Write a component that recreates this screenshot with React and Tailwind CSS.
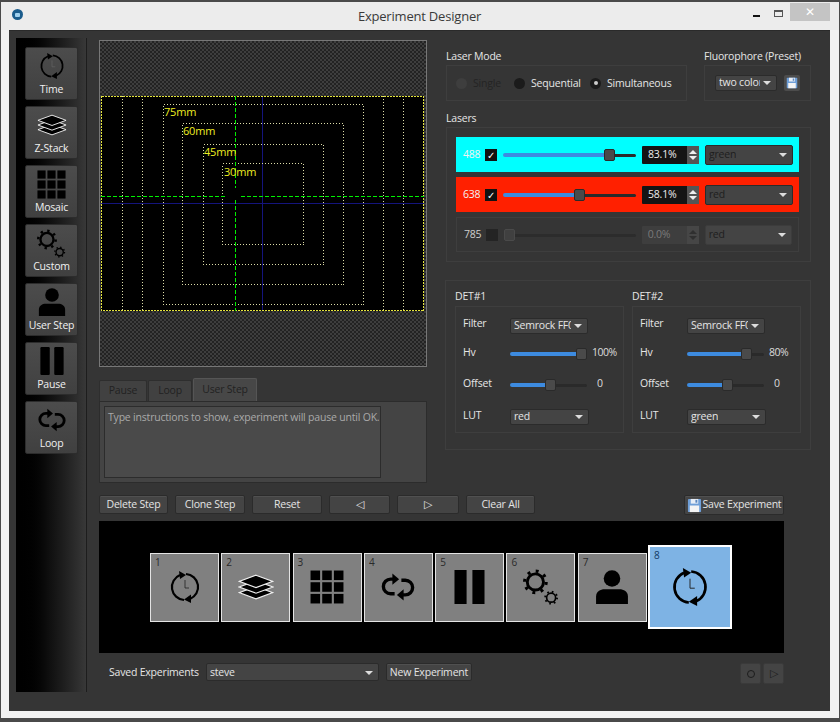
import React from 'react'

const FONT = { fontFamily: '"Open Sans", "Noto Sans", sans-serif' }

function ClockIcon({ className, faint }) {
  return (
    <svg viewBox="0 0 32 32" className={className}>
      <g fill="none" stroke="#000" strokeWidth="2.2">
        <path d="M15 29 A13 13 0 0 1 11 4" />
        <path d="M17 3 A13 13 0 0 1 21 28" />
      </g>
      <path d="M10 0 L17 4 L11 8 Z" fill="#000" />
      <path d="M22 23.5 L22 32 L15 28.5 Z" fill="#000" />
      <path d="M16 9 V17 H20" fill="none" stroke={faint ? '#666' : '#222'} strokeWidth="0.8" />
    </svg>
  )
}

function LayersIcon({ className }) {
  return (
    <svg viewBox="0 0 32 32" className={className}>
      <g fill="#000" stroke="#eee" strokeWidth="1">
        <path d="M16 15.5 L31 21 L16 26.5 L1 21 Z" />
        <path d="M16 10.5 L31 16 L16 21.5 L1 16 Z" />
        <path d="M16 5.5 L31 11 L16 16.5 L1 11 Z" />
      </g>
    </svg>
  )
}

function GridIcon({ className }) {
  const cells = []
  for (let y = 0; y < 3; y++) {
    for (let x = 0; x < 3; x++) {
      cells.push(<rect key={`${x}-${y}`} x={0.5 + x * 11} y={0.5 + y * 11} width="9" height="9" fill="#000" />)
    }
  }
  return (
    <svg viewBox="0 0 32 32" className={className}>
      {cells}
    </svg>
  )
}

function LoopIcon({ className }) {
  return (
    <svg viewBox="0 0 32 32" className={className}>
      <g fill="none" stroke="#000" strokeWidth="3">
        <path d="M12 9 H9.5 A6.5 6.5 0 0 0 9.5 22 H13" />
        <path d="M19 10 H22.5 A6.5 6.5 0 0 1 22.5 23 H20" />
      </g>
      <path d="M11 4 L17 9 L11 14 Z" fill="#000" />
      <path d="M21 18 L15 23 L21 28 Z" fill="#000" />
    </svg>
  )
}

function PauseIcon({ className, rounded }) {
  return (
    <svg viewBox="0 0 32 32" preserveAspectRatio="none" className={className}>
      <rect x="0.5" y="0" width="12.5" height="32" rx={rounded ? 1.5 : 0} fill="#000" />
      <rect x="19" y="0" width="12.5" height="32" rx={rounded ? 1.5 : 0} fill="#000" />
    </svg>
  )
}

function GearsIcon({ className }) {
  return (
    <svg viewBox="0 0 32 32" className={className} fill="none" stroke="#000">
      <circle cx="11" cy="11.5" r="7.2" strokeWidth="2.6" />
      <circle cx="11" cy="11.5" r="9.6" strokeWidth="2.8" strokeDasharray="2.6 4.94" />
      <circle cx="25" cy="25.5" r="4" strokeWidth="1.5" />
      <circle cx="25" cy="25.5" r="5.3" strokeWidth="1.6" strokeDasharray="1.5 2.66" />
    </svg>
  )
}

function PersonIcon({ className }) {
  return (
    <svg viewBox="0 0 32 32" className={className}>
      <circle cx="16" cy="8" r="7.8" fill="#000" />
      <path d="M1 32 V25 C1 20 5 18 9 18 H23 C27 18 31 20 31 25 V32 Z" fill="#000" />
    </svg>
  )
}

function FloppyIcon({ className }) {
  return (
    <svg viewBox="0 0 16 16" className={className}>
      <rect x="1" y="1" width="14" height="14" rx="1" fill="#6f9fd8" />
      <rect x="4" y="1" width="8" height="5" fill="#e8eef6" />
      <rect x="9" y="2" width="2" height="3" fill="#5a86bd" />
      <rect x="3" y="8" width="10" height="7" fill="#f4f4f4" />
    </svg>
  )
}

function SideButton({ icon, label }) {
  return (
    <div className="w-[53px] h-[53px] shrink-0 flex flex-col items-center rounded-[2px] border border-[#2c2c2c] bg-gradient-to-b from-[#4c4c4c] to-[#404040]">
      <div className="h-[34px] flex items-center justify-center pt-[2px]">{icon}</div>
      <span className="text-[10.5px] leading-[14px] text-[#f0f0f0] whitespace-nowrap">{label}</span>
    </div>
  )
}

function ToolButton({ children, className }) {
  return (
    <div className={`h-[19px] flex items-center justify-center whitespace-nowrap rounded-[2px] border border-[#2b2b2b] bg-[#444444] text-[10.5px] text-[#e4e4e4] shadow-[inset_0_1px_0_#505050] ${className}`}>
      {children}
    </div>
  )
}

function Select({ label, className, dim }) {
  return (
    <div className={`flex items-center justify-between rounded-[2px] border bg-[#444444] pl-[3px] pr-[5px] text-[10.5px] ${dim ? 'border-[#3c3c3c] text-[#a8a8a8]' : 'border-[#2b2b2b] text-[#e4e4e4]'} ${className}`}>
      <span className="overflow-hidden whitespace-nowrap">{label}</span>
      <span className="ml-[3px] w-0 h-0 shrink-0 border-x-[4px] border-x-transparent border-t-[4px] border-t-[#dddddd]" />
    </div>
  )
}

function Slider({ pct, className, dim }) {
  return (
    <div className={`flex items-center ${className}`}>
      <div
        className={`h-[4px] rounded-l-[2px] ${dim ? 'bg-[#2a2a2a]' : 'bg-[#3d8be0]'}`}
        style={{ width: `${pct}%` }}
      />
      <div className={`w-[11px] h-[12px] shrink-0 rounded-[2px] border ${dim ? 'bg-[#404040] border-[#4a4a4a]' : 'bg-[#4a4a4a] border-[#2a2a2a]'}`} />
      <div className={`h-[3px] flex-1 rounded-r-[2px] ${dim ? 'bg-[#2c2c2c]' : 'bg-[#2a2a2a]'}`} />
    </div>
  )
}

function Spin({ value, dim }) {
  return (
    <div className={`ml-[6px] w-[57px] h-[18px] shrink-0 flex items-center rounded-[1px] ${dim ? 'bg-[#3e3e3e]' : 'bg-[#141414]'}`}>
      <span className={`flex-1 pl-[6px] text-[10.5px] ${dim ? 'text-[#7a7a7a]' : 'text-[#eeeeee]'}`}>{value}</span>
      <div className={`w-[12px] h-full flex flex-col items-center justify-center gap-[2px] ${dim ? 'bg-[#464646]' : 'bg-[#555555]'}`}>
        <span className={`w-0 h-0 border-x-[4px] border-x-transparent border-b-[4px] ${dim ? 'border-b-[#2f2f2f]' : 'border-b-[#eeeeee]'}`} />
        <span className={`w-0 h-0 border-x-[4px] border-x-transparent border-t-[4px] ${dim ? 'border-t-[#2f2f2f]' : 'border-t-[#eeeeee]'}`} />
      </div>
    </div>
  )
}

function LaserRow({ wave, pct, value, lut, rowClass, dim }) {
  return (
    <div className={`h-[35px] flex items-center pl-[7px] pr-[6px] pt-[1px] ${rowClass}`}>
      <span className={`w-[22px] text-[10.5px] ${dim ? 'text-[#cfcfcf]' : 'text-[#f2f2f2]'}`}>{wave}</span>
      <div className={`w-[12px] h-[12px] shrink-0 flex items-center justify-center text-[10px] leading-none text-white ${dim ? 'bg-[#242424]' : 'bg-[#111111]'}`}>
        {dim ? '' : '✓'}
      </div>
      <Slider pct={pct} dim={dim} className="ml-[6px] w-[133px]" />
      <Spin value={value} dim={dim} />
      <Select label={lut} dim={dim} className="ml-[6px] w-[88px] h-[20px] !text-[#1e1e1e]" />
    </div>
  )
}

function RadioItem({ label, dot, dim, className }) {
  return (
    <div className={`flex items-center ${className}`}>
      <span className={`w-[11px] h-[11px] rounded-full flex items-center justify-center ${dim ? 'bg-[#3e3e3e]' : 'bg-[#1b1b1b]'}`}>
        {dot && <span className="w-[4px] h-[4px] rounded-full bg-[#cccccc]" />}
      </span>
      <span className={`ml-[6px] pt-[1px] text-[10.5px] ${dim ? 'text-[#242424]' : 'text-[#e6e6e6]'}`}>{label}</span>
    </div>
  )
}

function DetRow({ label, className, children }) {
  return (
    <div className={`flex items-center ${className}`}>
      <span className="w-[47px] pb-[3px] text-[10.5px] text-[#e6e6e6]">{label}</span>
      {children}
    </div>
  )
}

function Detector({ title, hv, hvLabel, lut, className }) {
  return (
    <div className={`w-[169px] ${className}`}>
      <div className="h-[25px] flex items-end pb-[1px] text-[10.5px] text-[#e6e6e6]">{title}</div>
      <div className="h-[127px] border border-[#3e3e3e] pl-[7px] pt-[10px]">
        <DetRow label="Filter" className="h-[17px]">
          <Select label="Semrock FF01" className="w-[78px] h-[16px]" />
        </DetRow>
        <DetRow label="Hv" className="h-[16px] mt-[12px]">
          <Slider pct={hv} className="w-[77px]" />
          <span className="ml-[5px] pb-[2px] text-[10.5px] tracking-[-0.5px] text-[#dcdcdc]">{hvLabel}</span>
        </DetRow>
        <DetRow label="Offset" className="h-[16px] mt-[15px]">
          <Slider pct={45} className="w-[77px]" />
          <span className="ml-[5px] pl-[5px] pb-[2px] text-[10.5px] text-[#dcdcdc]">0</span>
        </DetRow>
        <DetRow label="LUT" className="h-[16px] mt-[16px]">
          <Select label={lut} className="w-[79px] h-[16px]" />
        </DetRow>
      </div>
    </div>
  )
}

function StepTile({ n, children, selected }) {
  return (
    <div
      className={`relative shrink-0 flex items-center justify-center ${
        selected
          ? 'w-[84px] h-[84px] ml-[-1px] bg-[#7eb3e4] border-2 border-white'
          : 'w-[69px] h-[69px] bg-[#808080] border-[1.5px] border-[#e4e4e4]'
      }`}
    >
      <span className={`absolute left-[4px] top-[1px] text-[10px] ${selected ? 'text-[#123a63]' : 'text-[#2a2a2a]'}`}>{n}</span>
      {children}
    </div>
  )
}

// stage overview, drawn as a picture: 323x215, origin at the black area's corner
function StageView() {
  const rects = [
    [62, 8, 200, 200],
    [81, 27, 161, 161],
    [102, 48, 120, 120],
    [121, 67, 81, 81],
  ]
  const labels = [
    ['75mm', 63, 20],
    ['60mm', 82, 39],
    ['45mm', 103, 60],
    ['30mm', 123, 80],
  ]
  return (
    <svg viewBox="0 0 323 215" shapeRendering="crispEdges" className="block w-[323px] h-[215px] mx-[1px] bg-black">
      <g fill="none" stroke="#14147c" strokeWidth="1">
        <path d="M161.5 0 V215" />
        <path d="M0 107.5 H323" />
      </g>
      <g fill="none" stroke="#dcdca8" strokeWidth="1" strokeDasharray="1 2">
        {rects.map(([x, y, w, h]) => (
          <rect key={x} x={x + 0.5} y={y + 0.5} width={w} height={h} />
        ))}
        <path d="M21.5 0 V215 M41.5 0 V215 M282.5 0 V215 M302.5 0 V215" />
      </g>
      <rect x="0.5" y="0.5" width="322" height="214" fill="none" stroke="#e4e43c" strokeWidth="1" strokeDasharray="2 1" />
      <g fill="none" stroke="#00f000" strokeWidth="1" strokeDasharray="4 2">
        <path d="M134.5 0 V92" />
        <path d="M134.5 104 V215" />
        <path d="M0 100.5 H126" />
        <path d="M140 100.5 H323" />
      </g>
      <g fill="#eeee20" fontSize="11" shapeRendering="auto" style={FONT}>
        {labels.map(([t, x, y]) => (
          <text key={t} x={x} y={y}>{t}</text>
        ))}
      </g>
    </svg>
  )
}

const PATTERN = 'bg-[repeating-conic-gradient(#3e3e3e_0%_25%,#232323_0%_50%)] bg-[length:4px_4px]'

export default function App() {
  return (
    <div style={FONT} className="w-[840px] h-[722px] overflow-hidden tracking-[-0.2px] border-t-2 border-b-[4px] border-x border-[#4a4a4a] bg-[#f2f2f2]">
      {/* Title bar */}
      <div className="h-[28px] flex items-start bg-[#ececec]">
        <div className="mt-[7px] ml-[11px] w-[11px] h-[11px] rounded-full bg-[#1a5c8c] flex items-center justify-center">
          <span className="w-[5px] h-[4px] rounded-[1px] bg-[#9fd0ee]" />
        </div>
        <div className="flex-1 pt-[5px] pl-[63px] text-center text-[13px] text-[#3a3a3a]">Experiment Designer</div>
        <div className="flex items-start">
          <span className="mt-[13px] w-[7px] h-[2px] bg-[#111111]" />
          <span className="mt-[8px] ml-[14px] w-[9px] h-[7px] border border-[#555555] border-t-2" />
          <div className="ml-[7px] mt-[1px] mr-[9px] w-[40px] h-[18px] bg-[#c4c4c4] flex items-center justify-center text-[12px] leading-none text-white">✕</div>
        </div>
      </div>

      {/* Window body */}
      <div className="ml-[8px] mr-[9px] h-[681px] flex bg-[#353535] border-t border-[#2a2a2a] pl-[7px] pt-[7px]">
        {/* Step palette */}
        <div className="w-[71px] h-[654px] shrink-0 flex flex-col gap-[6px] pt-[9px] pl-[9px] bg-gradient-to-r from-black via-[#111111] to-[#383838] border-r border-[#1d1d1d]">
          <SideButton label="Time" icon={<ClockIcon faint className="w-[26px] h-[26px]" />} />
          <SideButton label="Z-Stack" icon={<LayersIcon className="w-[30px] h-[30px]" />} />
          <SideButton label="Mosaic" icon={<GridIcon className="w-[29px] h-[29px]" />} />
          <SideButton label="Custom" icon={<GearsIcon className="w-[29px] h-[29px]" />} />
          <SideButton label="User Step" icon={<PersonIcon className="w-[28px] h-[28px]" />} />
          <SideButton label="Pause" icon={<PauseIcon rounded className="w-[24px] h-[28px]" />} />
          <SideButton label="Loop" icon={<LoopIcon className="w-[30px] h-[30px]" />} />
        </div>

        <div className="ml-[12px] w-[712px] pt-[2px]">
          <div className="flex">
            {/* Stage + step settings */}
            <div className="w-[328px] shrink-0">
              <div className={`h-[327px] border border-[#777777] pt-[55px] ${PATTERN}`}>
                <StageView />
              </div>
              <div className="mt-[11px] h-[23px] flex items-end">
                <div className="w-[48px] h-[21px] flex items-center justify-center rounded-t-[2px] border border-b-0 border-[#2e2e2e] bg-[#414141] text-[10.5px] text-[#222222]">Pause</div>
                <div className="ml-[1px] w-[44px] h-[21px] flex items-center justify-center rounded-t-[2px] border border-b-0 border-[#2e2e2e] bg-[#414141] text-[10.5px] text-[#222222]">Loop</div>
                <div className="ml-[1px] w-[64px] h-[23px] flex items-center justify-center rounded-t-[2px] border border-b-0 border-[#555555] bg-[#474747] text-[10.5px] text-[#222222]">User Step</div>
              </div>
              <div className="h-[82px] border border-[#2c2c2c] bg-[#444444] p-[4px]">
                <div className="w-[277px] h-[72px] border border-[#2c2c2c] bg-[#4a4a4a] pl-[3px] pt-[3px] text-[10.5px] whitespace-nowrap text-[#a9a9a9]">
                  Type instructions to show, experiment will pause until OK.
                </div>
              </div>
            </div>

            {/* Laser + detector settings */}
            <div className="ml-[18px] w-[366px] shrink-0">
              <div className="h-[25px] flex items-end pl-[1px] text-[10.5px] text-[#e6e6e6]">
                <span className="w-[258px]">Laser Mode</span>
                <span>Fluorophore (Preset)</span>
              </div>
              <div className="flex pl-[1px]">
                <div className="w-[241px] h-[36px] flex items-center border border-[#3e3e3e] pl-[9px]">
                  <RadioItem label="Single" dim className="w-[58px]" />
                  <RadioItem label="Sequential" className="w-[76px]" />
                  <RadioItem label="Simultaneous" dot />
                </div>
                <div className="ml-[17px] w-[107px] h-[36px] flex items-center border border-[#3e3e3e] pl-[10px]">
                  <Select label="two colors" className="w-[62px] h-[16px]" />
                  <div className="ml-[7px] w-[16px] h-[16px] rounded-[2px] bg-[#4c4c4c] flex items-center justify-center">
                    <FloppyIcon className="w-[12px] h-[12px]" />
                  </div>
                </div>
              </div>
              <div className="h-[26px] flex items-end pl-[1px] text-[10.5px] text-[#e6e6e6]">Lasers</div>
              <div className="ml-[1px] w-[365px] h-[135px] border border-[#3e3e3e] pl-[9px] pr-[11px] pt-[9px] flex flex-col gap-[5px]">
                <LaserRow wave="488" pct={76} value="83.1%" lut="green" rowClass="bg-[#00ffff]" />
                <LaserRow wave="638" pct={53.5} value="58.1%" lut="red" rowClass="bg-[#ff2000]" />
                <LaserRow wave="785" pct={0} value="0.0%" lut="red" dim rowClass="border border-[#3e3e3e]" />
              </div>
              <div className="mt-[18px] h-[170px] border border-[#3e3e3e] flex pl-[9px]">
                <Detector title="DET#1" hv={86} hvLabel="100%" lut="red" />
                <Detector title="DET#2" hv={70} hvLabel="80%" lut="green" className="ml-[8px]" />
              </div>
            </div>
          </div>

          {/* Step toolbar */}
          <div className="mt-[12px] w-[685px] h-[20px] flex gap-[7px]">
            <ToolButton className="w-[69px]">Delete Step</ToolButton>
            <ToolButton className="w-[70px]">Clone Step</ToolButton>
            <ToolButton className="w-[70px]">Reset</ToolButton>
            <ToolButton className="w-[61px]">◁</ToolButton>
            <ToolButton className="w-[62px]">▷</ToolButton>
            <ToolButton className="w-[69px]">Clear All</ToolButton>
            <ToolButton className="w-[100px] !h-[20px] ml-auto gap-[1px]">
              <FloppyIcon className="w-[15px] h-[15px] shrink-0" />
              Save Experiment
            </ToolButton>
          </div>

          {/* Experiment sequence */}
          <div className="mt-[6px] w-[685px] h-[132px] bg-black flex items-center gap-[2.3px] pl-[51px]">
            <StepTile n="1"><ClockIcon className="w-[32px] h-[32px]" /></StepTile>
            <StepTile n="2"><LayersIcon className="w-[36px] h-[36px]" /></StepTile>
            <StepTile n="3"><GridIcon className="w-[34px] h-[34px]" /></StepTile>
            <StepTile n="4"><LoopIcon className="w-[36px] h-[36px]" /></StepTile>
            <StepTile n="5"><PauseIcon className="w-[31px] h-[34px]" /></StepTile>
            <StepTile n="6"><GearsIcon className="w-[36px] h-[36px]" /></StepTile>
            <StepTile n="7"><PersonIcon className="w-[34px] h-[34px]" /></StepTile>
            <StepTile n="8" selected><ClockIcon className="w-[38px] h-[38px]" /></StepTile>
          </div>

          {/* Saved experiments */}
          <div className="mt-[10px] w-[685px] flex items-start">
            <span className="ml-[10px] w-[97px] h-[20px] flex items-center text-[10.5px] text-[#e6e6e6]">Saved Experiments</span>
            <Select label="steve" className="w-[173px] h-[18px] pt-[1px]" />
            <ToolButton className="ml-[7px] w-[86px] !h-[18px] pt-[1px]">New Experiment</ToolButton>
            <div className="ml-auto w-[21px] h-[21px] flex items-center justify-center rounded-[2px] bg-[#444444] border border-[#3a3a3a]">
              <span className="w-[8px] h-[8px] rounded-full border border-[#1c1c1c]" />
            </div>
            <div className="ml-[2px] w-[21px] h-[21px] flex items-center justify-center rounded-[2px] bg-[#444444] border border-[#3a3a3a] text-[11px] text-[#1c1c1c]">▷</div>
          </div>
        </div>
      </div>
    </div>
  )
}
